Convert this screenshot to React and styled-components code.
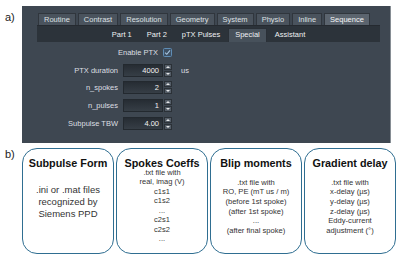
import React from 'react'
import styled, { createGlobalStyle } from 'styled-components'

const GlobalStyle = createGlobalStyle`
  html, body { margin: 0; padding: 0; background: #ffffff; }
  body {
    width: 400px;
    height: 264px;
    overflow: hidden;
    font-family: "Liberation Sans", Arial, sans-serif;
  }
`

const Page = styled.div`
  width: 400px;
  height: 264px;
  display: flex;
  flex-direction: column;
`

const SectionA = styled.div`
  display: flex;
  padding-top: 6px;
  height: 137px;
`

const SectionB = styled.div`
  display: flex;
  margin-top: 5px;
`

const Tag = styled.div`
  width: 22px;
  box-sizing: border-box;
  padding-left: 5px;
  padding-top: ${p => p.$top}px;
  font-size: 11px;
  line-height: 12px;
  color: #222;
`

const Panel = styled.div`
  width: 369px;
  box-sizing: border-box;
  background: #3e4751;
  border-right: 1px solid #868d94;
  padding: 7px 0 0 16px;
  display: flex;
  flex-direction: column;
`

const TabRow = styled.div`
  display: flex;
  gap: 2px;
  height: 12px;
`

const Tab = styled.div`
  height: 12px;
  box-sizing: border-box;
  padding: 0 5px;
  border: 1px solid #30363d;
  border-bottom: none;
  background: ${p => (p.$active ? '#5b646e' : '#4a535d')};
  color: ${p => (p.$active ? '#f4f5f6' : '#dde0e3')};
  font-size: 7.5px;
  line-height: 11px;
  white-space: nowrap;
`

const SubBand = styled.div`
  margin-left: -1px;
  width: 343px;
  height: 17px;
  box-sizing: border-box;
  background: #2c333a;
  border-top: 1px solid #252a30;
  display: flex;
  justify-content: center;
  align-items: flex-end;
  gap: 1px;
`

const SubTab = styled.div`
  height: 14px;
  box-sizing: border-box;
  padding: 0 6px;
  background: ${p => (p.$active ? '#47515b' : 'transparent')};
  border: 1px solid ${p => (p.$active ? '#2a3037' : 'transparent')};
  border-bottom: none;
  color: #eef0f2;
  font-size: 7.5px;
  line-height: 12px;
  white-space: nowrap;
`

const Form = styled.div`
  margin-top: 4px;
  display: flex;
  flex-direction: column;
  gap: 4.7px;
`

const Row = styled.div`
  display: flex;
  align-items: center;
  height: 13px;
  gap: 5px;
`

const Label = styled.div`
  width: 80px;
  text-align: right;
  color: #dcdfe2;
  font-size: 7.5px;
  white-space: nowrap;
`

const Check = styled.div`
  display: flex;
  align-items: center;
  gap: 5px;
  margin-left: -5px;
  color: #dcdfe2;
  font-size: 7.5px;
`

const Field = styled.div`
  display: flex;
  gap: 1px;
`

const Input = styled.div`
  width: 40px;
  height: 13px;
  box-sizing: border-box;
  background: linear-gradient(#262c33, #363e46);
  border: 1px solid #23292f;
  color: #f2f2f2;
  font-size: 7.5px;
  line-height: 11px;
  text-align: right;
  padding-right: 3px;
`

const Spin = styled.div`
  width: 8px;
  height: 13px;
  display: flex;
  flex-direction: column;
  gap: 1px;
`

const SpinHalf = styled.div`
  flex: 1;
  background: #545d67;
  border: 1px solid #2b3137;
  box-sizing: border-box;
  display: flex;
  align-items: center;
  justify-content: center;
`

const Unit = styled.div`
  color: #dcdfe2;
  font-size: 7.5px;
  margin-left: 4px;
`

const Boxes = styled.div`
  display: flex;
  gap: 2px;
`

const Box = styled.div`
  width: 92px;
  height: 106px;
  box-sizing: border-box;
  border: 1.5px solid #2f6e91;
  border-radius: 15px;
  padding-top: 8px;
  text-align: center;
`

const Title = styled.div`
  font-weight: 700;
  font-size: 10.8px;
  line-height: 13px;
  color: #111;
  white-space: nowrap;
`

const Body = styled.div`
  margin-top: ${p => p.$top}px;
  font-size: ${p => p.$size}px;
  line-height: ${p => p.$lh}px;
  color: #333;
  white-space: nowrap;
`

const tabs = ['Routine', 'Contrast', 'Resolution', 'Geometry', 'System', 'Physio', 'Inline', 'Sequence']
const subTabs = ['Part 1', 'Part 2', 'pTX Pulses', 'Special', 'Assistant']

const params = [
  { label: 'PTX duration', value: '4000', unit: 'us' },
  { label: 'n_spokes', value: '2' },
  { label: 'n_pulses', value: '1' },
  { label: 'Subpulse TBW', value: '4.00' },
]

const boxes = [
  { title: 'Subpulse Form', top: 13.5, size: 9.5, lh: 12, lines: ['.ini or .mat files', 'recognized by', 'Siemens PPD'] },
  { title: 'Spokes Coeffs', top: -2.3, size: 7.5, lh: 9.5, lines: ['.txt file with', 'real, imag (V)', 'c1s1', 'c1s2', '...', 'c2s1', 'c2s2', '...'] },
  { title: 'Blip moments', top: 7.6, size: 7.6, lh: 9.7, lines: ['.txt file with', 'RO, PE (mT us / m)', '(before 1st spoke)', '(after 1st spoke)', '...', '(after final spoke)'] },
  { title: 'Gradient delay', top: 7.6, size: 7.6, lh: 9.7, lines: ['.txt file with', 'x-delay (\u00b5s)', 'y-delay (\u00b5s)', 'z-delay (\u00b5s)', 'Eddy-current', 'adjustment (\u00b0)'] },
]

function Arrow({ up }) {
  return (
    <svg width="4" height="2" viewBox="0 0 4 2">
      <path d={up ? 'M0 2 L2 0 L4 2 Z' : 'M0 0 L4 0 L2 2 Z'} fill="#e4e6e8" />
    </svg>
  )
}

function Checkbox() {
  return (
    <svg width="9" height="9" viewBox="0 0 9 9">
      <rect x="0.5" y="0.5" width="8" height="8" rx="1" fill="#3d5064" stroke="#5f8db5" />
      <path d="M2 4.6 L3.8 6.3 L7 2.4" fill="none" stroke="#a9c6e0" strokeWidth="1.1" />
    </svg>
  )
}

export default function App() {
  return (
    <Page>
      <GlobalStyle />
      <SectionA>
        <Tag $top={5}>a)</Tag>
        <Panel>
          <TabRow>
            {tabs.map(t => (
              <Tab key={t} $active={t === 'Sequence'}>{t}</Tab>
            ))}
          </TabRow>
          <SubBand>
            {subTabs.map(t => (
              <SubTab key={t} $active={t === 'Special'}>{t}</SubTab>
            ))}
          </SubBand>
          <Form>
            <Row>
              <Label />
              <Check>
                Enable PTX
                <Checkbox />
              </Check>
            </Row>
            {params.map(p => (
              <Row key={p.label}>
                <Label>{p.label}</Label>
                <Field>
                  <Input>{p.value}</Input>
                  <Spin>
                    <SpinHalf><Arrow up /></SpinHalf>
                    <SpinHalf><Arrow /></SpinHalf>
                  </Spin>
                </Field>
                {p.unit && <Unit>{p.unit}</Unit>}
              </Row>
            ))}
          </Form>
        </Panel>
      </SectionA>
      <SectionB>
        <Tag $top={0}>b)</Tag>
        <Boxes>
          {boxes.map(b => (
            <Box key={b.title}>
              <Title>{b.title}</Title>
              <Body $top={b.top} $size={b.size} $lh={b.lh}>
                {b.lines.map((l, i) => (
                  <div key={i}>{l}</div>
                ))}
              </Body>
            </Box>
          ))}
        </Boxes>
      </SectionB>
    </Page>
  )
}
